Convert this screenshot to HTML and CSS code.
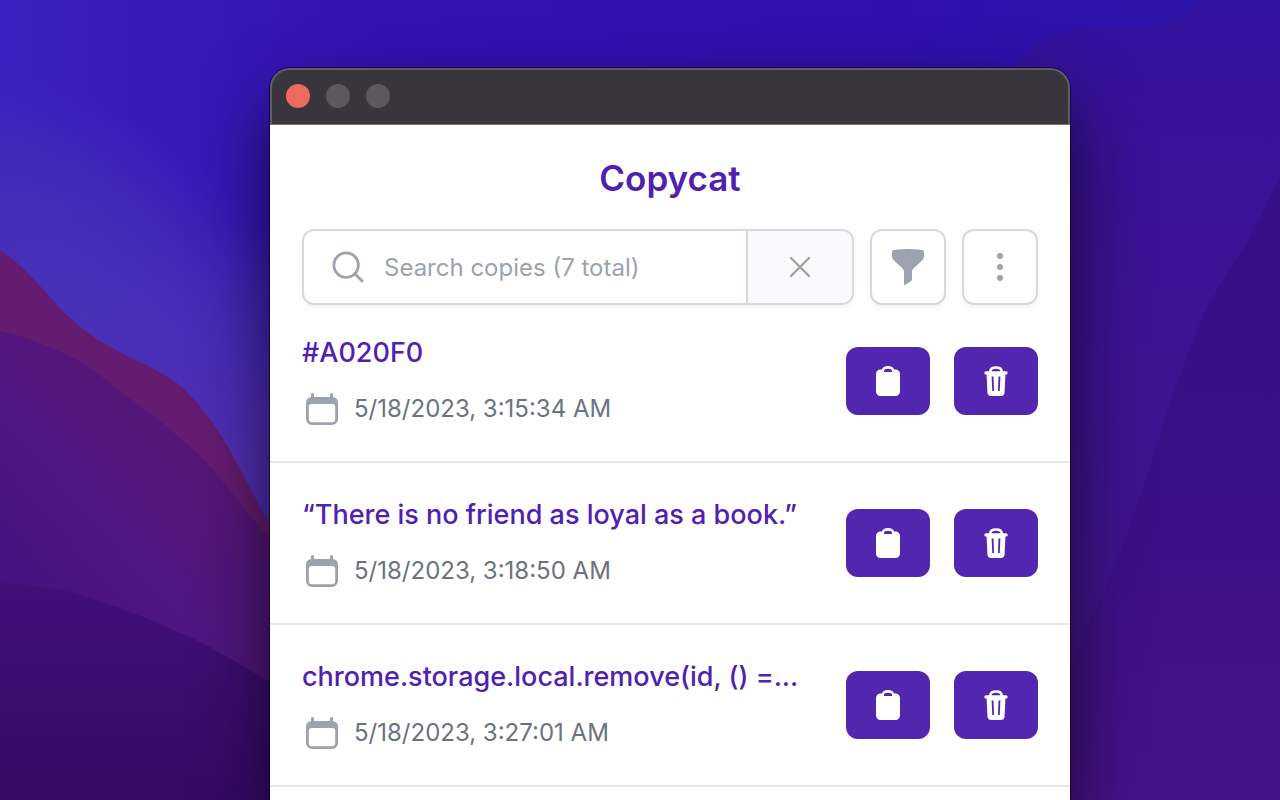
FILE: index.html
```html
<!DOCTYPE html>
<html lang="en">
<head>
<meta charset="utf-8">
<title>Copycat</title>
<link rel="stylesheet" href="styles.css">
</head>
<body>
<svg class="wallpaper" viewBox="0 0 1280 800" preserveAspectRatio="xMidYMid slice" aria-hidden="true">
  <defs>
    <linearGradient id="sky" x1="0" y1="0" x2="1" y2="0">
      <stop offset="0" stop-color="#3a20c0"/><stop offset=".3" stop-color="#3510b2"/><stop offset=".7" stop-color="#310fae"/><stop offset="1" stop-color="#2c14a8"/>
    </linearGradient>
    <radialGradient id="glow" gradientUnits="userSpaceOnUse" cx="0" cy="0" r="1" gradientTransform="translate(80 310) rotate(40) scale(300 190)">
      <stop offset="0" stop-color="#4733b6"/><stop offset=".5" stop-color="#4733b6" stop-opacity=".65"/><stop offset="1" stop-color="#4733b6" stop-opacity="0"/>
    </radialGradient>
    <radialGradient id="glow2" gradientUnits="userSpaceOnUse" cx="240" cy="470" r="240">
      <stop offset="0" stop-color="#5230b4"/><stop offset="1" stop-color="#5230b4" stop-opacity="0"/>
    </radialGradient>
    <linearGradient id="east" x1="0" y1="0" x2="0" y2="1">
      <stop offset="0" stop-color="#33129f"/><stop offset=".3" stop-color="#3b1294"/><stop offset=".7" stop-color="#3f148e"/><stop offset="1" stop-color="#431488"/>
    </linearGradient>
    <linearGradient id="slope" x1="0" y1="0" x2="0" y2="1">
      <stop offset="0" stop-color="#360f8a"/><stop offset=".5" stop-color="#3a1086"/><stop offset="1" stop-color="#441288"/>
    </linearGradient>
    <linearGradient id="mid" gradientUnits="userSpaceOnUse" x1="20" y1="600" x2="200" y2="440">
      <stop offset="0" stop-color="#451180"/><stop offset=".5" stop-color="#501680"/><stop offset="1" stop-color="#571678"/>
    </linearGradient>
    <linearGradient id="low" x1="0" y1="0" x2="0" y2="1">
      <stop offset="0" stop-color="#421078"/><stop offset="1" stop-color="#340a66"/>
    </linearGradient>
  </defs>
  <rect width="1280" height="800" fill="url(#sky)"/>
  <rect width="600" height="800" fill="url(#glow)"/>
  <rect width="600" height="800" fill="url(#glow2)"/>
  <path fill="url(#east)" d="M1000 90C1030 36 1060 28 1100 28C1150 28 1180 24 1205 0H1280V800H1000Z"/>
  <path fill="url(#slope)" d="M1280 177C1265 205 1255 232 1243 249C1228 270 1213 295 1203 316C1192 340 1182 368 1170 403C1157 440 1146 482 1133 515C1123 543 1115 570 1103 592C1090 617 1080 645 1060 690V800H1280Z"/>
  <path fill="#641c70" d="M0 250C25 266 45 293 67 315C86 334 109 347 133 359C155 369 174 378 190 395C205 411 220 432 233 456C246 480 257 502 290 562V800H0Z"/>
  <path fill="url(#mid)" d="M0 331C25 336 46 345 67 355C90 365 112 385 133 401C155 415 180 437 200 456C222 478 244 510 290 562V800H0Z"/>
  <path fill="url(#low)" d="M0 582C25 584 45 587 67 591C90 597 110 604 133 613C156 622 180 632 200 642C224 654 245 668 290 693V800H0Z"/>
</svg>
<svg class="sprite" aria-hidden="true">
  <symbol id="icon-calendar" viewBox="0 0 32 32">
    <path fill="currentColor" fill-rule="evenodd" d="M6.500 0a1.500 1.500 0 0 1 1.500 1.500V4h16V1.500a1.500 1.500 0 0 1 3 0V4a6 6 0 0 1 5 6v16a6 6 0 0 1-6 6H6a6 6 0 0 1-6-6V10a6 6 0 0 1 5-6V1.500A1.500 1.500 0 0 1 6.500 0zM5.500 11A2.700 2.700 0 0 0 2.800 13.700V26A3.200 3.200 0 0 0 6 29.200h20a3.200 3.200 0 0 0 3.200-3.200V13.700A2.700 2.700 0 0 0 26.500 11z"/>
  </symbol>
  <symbol id="icon-clipboard" viewBox="0 0 24 30">
    <path fill="currentColor" fill-rule="evenodd" d="M4.500 3.500H6C6.500 1.500 8.500 0 12 0s5.500 1.500 6 3.500h1.500A4.500 4.500 0 0 1 24 8v17.500a4.500 4.500 0 0 1-4.500 4.500h-15A4.500 4.500 0 0 1 0 25.500V8a4.500 4.500 0 0 1 4.500-4.500zM8 6h8V4.800C16 3.500 14.500 2.800 12 2.800S8 3.500 8 4.800z"/>
  </symbol>
  <symbol id="icon-trash" viewBox="0 0 24 30">
    <path fill="none" stroke="currentColor" stroke-width="2.600" d="M6.300 6.500V5.500C6.300 2.500 8.500 1.500 12 1.500S17.700 2.500 17.700 5.500V6.500"/>
    <path fill="currentColor" fill-rule="evenodd" d="M2 5.200h20a1.700 1.700 0 0 1 0 3.400h-.6L20.600 26a4 4 0 0 1-4 4H7.400a4 4 0 0 1-4-4L2.600 8.600H2a1.700 1.700 0 0 1 0-3.400zM7.600 10.500 8.300 25H10L9.500 10.500zm6.900 0L14 25h1.700l.7-14.500z"/>
  </symbol>
</svg>
<main class="desktop">
  <section class="window">
    <header class="titlebar">
      <span class="light light-close"></span>
      <span class="light"></span>
      <span class="light"></span>
    </header>
    <div class="app">
      <h1 class="app-title">Copycat</h1>
      <div class="toolbar">
        <div class="search">
          <label class="search-field">
            <svg class="search-icon" viewBox="0 0 34 34" fill="none" stroke="currentColor" stroke-width="3" stroke-linecap="round" aria-hidden="true"><circle cx="15" cy="15" r="13"/><path d="M24.500 24.500 32 32"/></svg>
            <input class="search-input" type="text" placeholder="Search copies (7 total)" aria-label="Search copies">
          </label>
          <button class="clear" type="button" aria-label="Clear search">
            <svg width="22" height="22" viewBox="0 0 22 22" fill="none" stroke="currentColor" stroke-width="2.400" stroke-linecap="round"><path d="M2 2l18 18M20 2 2 20"/></svg>
          </button>
        </div>
        <button class="tool" type="button" aria-label="Filter">
          <svg width="32" height="36" viewBox="0 0 32 36" fill="currentColor"><path d="M1.500 1Q16-1 30.500 1Q32 1.200 32 3V7C32 9 31.500 10 30 11.500L21.500 19.500C20.300 20.700 20 21.500 20 23V30C20 31 19.500 32 18.500 32.600L13.500 35.700Q12 36.500 12 35V23C12 21.500 11.500 20.700 10.500 19.500L2 11.500C.5 10 0 9 0 7V3Q0 1.200 1.500 1Z"/></svg>
        </button>
        <button class="tool" type="button" aria-label="More options">
          <svg width="8" height="28" viewBox="0 0 8 28" fill="currentColor"><circle cx="4" cy="3" r="3"/><circle cx="4" cy="14" r="3"/><circle cx="4" cy="25" r="3"/></svg>
        </button>
      </div>
      <ul class="copies">
        <li class="copy">
          <div class="copy-text">
            <a class="copy-title" href="#">#A020F0</a>
            <p class="copy-date"><svg class="calendar"><use href="#icon-calendar"/></svg>5/18/2023, 3:15:34 AM</p>
          </div>
          <button class="action" type="button" aria-label="Copy"><svg class="action-icon"><use href="#icon-clipboard"/></svg></button>
          <button class="action" type="button" aria-label="Delete"><svg class="action-icon"><use href="#icon-trash"/></svg></button>
        </li>
        <li class="copy">
          <div class="copy-text">
            <a class="copy-title" href="#">“There is no friend as loyal as a book.”</a>
            <p class="copy-date"><svg class="calendar"><use href="#icon-calendar"/></svg>5/18/2023, 3:18:50 AM</p>
          </div>
          <button class="action" type="button" aria-label="Copy"><svg class="action-icon"><use href="#icon-clipboard"/></svg></button>
          <button class="action" type="button" aria-label="Delete"><svg class="action-icon"><use href="#icon-trash"/></svg></button>
        </li>
        <li class="copy">
          <div class="copy-text">
            <a class="copy-title" href="#">chrome.storage.local.remove(id, () =...</a>
            <p class="copy-date"><svg class="calendar"><use href="#icon-calendar"/></svg>5/18/2023, 3:27:01 AM</p>
          </div>
          <button class="action" type="button" aria-label="Copy"><svg class="action-icon"><use href="#icon-clipboard"/></svg></button>
          <button class="action" type="button" aria-label="Delete"><svg class="action-icon"><use href="#icon-trash"/></svg></button>
        </li>
      </ul>
    </div>
  </section>
</main>
</body>
</html>
```

FILE: styles.css
```css
* {
  box-sizing: border-box;
}

body {
  margin: 0;
  background: #3410b0;
  font-family: Inter, "Liberation Sans", sans-serif;
}

.wallpaper {
  position: fixed;
  inset: 0;
  width: 100%;
  height: 100%;
  z-index: -1;
}

.sprite {
  display: none;
}

.desktop {
  display: flex;
  justify-content: center;
  min-height: 100vh;
  padding: 68px 0 0 60px;
}

.window {
  display: flex;
  flex-direction: column;
  width: 100%;
  max-width: 800px;
  border-radius: 20px 20px 0 0;
  box-shadow: 0 0 0 1px rgba(10, 0, 40, 0.7), 0 36px 72px rgba(0, 0, 0, 0.65);
}

.titlebar {
  display: flex;
  align-items: center;
  gap: 16px;
  height: 57px;
  padding: 0 14px 2px;
  background: #39353c;
  border: 2px solid #605d64;
  border-bottom: 1px solid #77747a;
  border-radius: 20px 20px 0 0;
}

.light {
  width: 24px;
  height: 24px;
  border-radius: 50%;
  background: #5d5960;
}

.light-close {
  background: #ed6a5e;
}

.app {
  flex: 1;
  padding-top: 32px;
  background: #fff;
}

.app-title {
  margin: 0;
  color: #5021b0;
  font-size: 35px;
  font-weight: 600;
  line-height: 42px;
  text-align: center;
}

.toolbar {
  display: flex;
  gap: 16px;
  padding: 30px 32px 0;
}

.search {
  display: flex;
  flex: 1;
  min-width: 0;
  height: 76px;
  overflow: hidden;
  border: 2px solid #d6d9df;
  border-radius: 12px;
  box-shadow: 0 2px 4px rgba(0, 0, 0, 0.06);
}

.search-field {
  display: flex;
  flex: 1;
  align-items: center;
  gap: 20px;
  min-width: 0;
  padding-left: 28px;
  color: #9ca3af;
}

.search-icon {
  flex-shrink: 0;
  width: 32px;
  height: 32px;
}

.search-input {
  flex: 1;
  min-width: 0;
  padding: 2px 0 0;
  border: 0;
  outline: 0;
  background: transparent;
  color: #374151;
  font: 400 24px/32px Inter, "Liberation Sans", sans-serif;
}

.search-input::placeholder {
  color: #9ca3af;
  opacity: 1;
}

.clear,
.tool {
  display: flex;
  flex-shrink: 0;
  align-items: center;
  justify-content: center;
  padding: 0;
  color: #9ca3af;
}

.clear {
  width: 106px;
  border: 0;
  border-left: 2px solid #d6d9df;
  background: #f9fafb;
}

.tool {
  width: 76px;
  height: 76px;
  border: 2px solid #d6d9df;
  border-radius: 12px;
  background: #fff;
  box-shadow: 0 2px 4px rgba(0, 0, 0, 0.06);
}

.copies {
  margin: 0;
  padding: 0;
  list-style: none;
}

.copy {
  display: flex;
  align-items: center;
  gap: 24px;
  padding: 24px 32px;
  border-bottom: 2px solid #e5e7eb;
}

.copy:first-child {
  padding-top: 20px;
}

.copy-text {
  flex: 1;
  min-width: 0;
}

.copy-title {
  display: block;
  overflow: hidden;
  color: #5021b0;
  font-size: 27px;
  font-weight: 500;
  line-height: 56px;
  text-decoration: none;
  text-overflow: ellipsis;
  white-space: nowrap;
}

.copy-date {
  display: flex;
  align-items: center;
  gap: 16px;
  margin: 0;
  padding-left: 4px;
  color: #6b7280;
  font-size: 24px;
  line-height: 56px;
}

.calendar {
  width: 32px;
  height: 32px;
  color: #9ca3af;
}

.action {
  display: flex;
  flex-shrink: 0;
  align-items: center;
  justify-content: center;
  width: 84px;
  height: 68px;
  padding: 0;
  border: 0;
  border-radius: 12px;
  background: #5226ae;
  color: #fff;
}

.action-icon {
  width: 24px;
  height: 30px;
}
```
